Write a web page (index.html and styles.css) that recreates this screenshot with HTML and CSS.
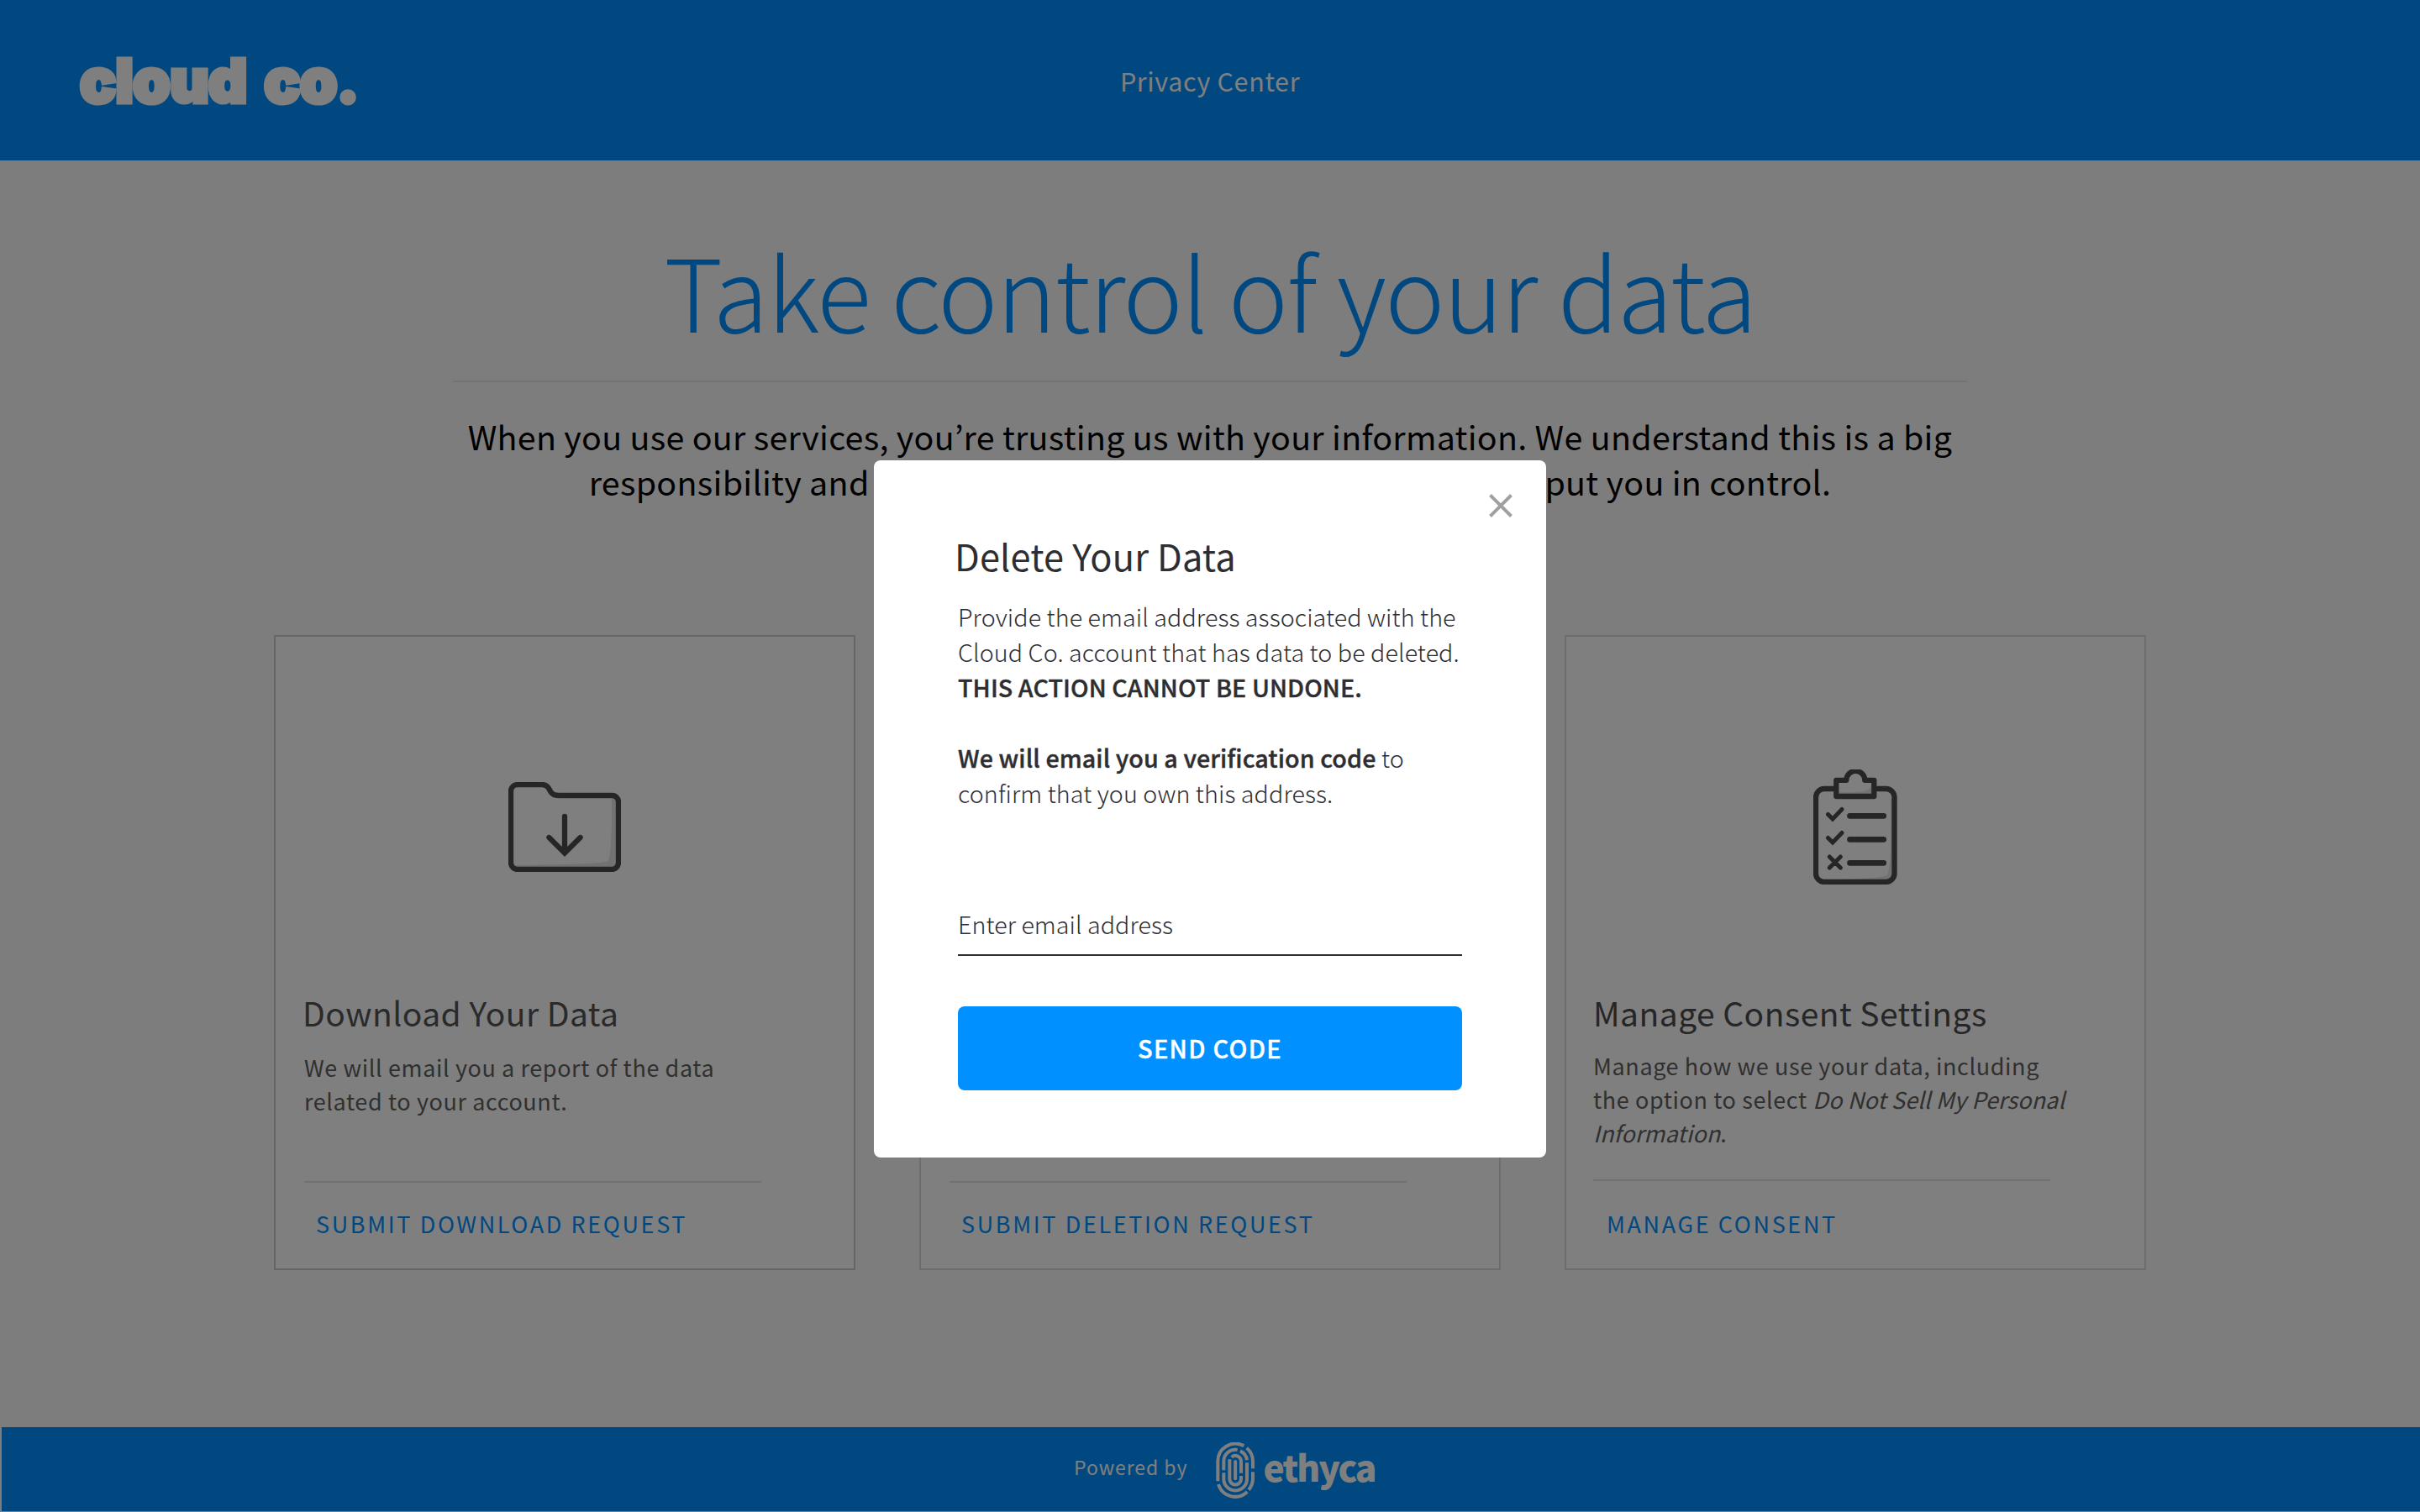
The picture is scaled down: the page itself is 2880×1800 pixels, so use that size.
FILE: index.html
```
<!DOCTYPE html>
<html lang="en">
<head>
	<meta charset="utf-8">
	<title>Privacy Center</title>
	<link rel="stylesheet" href="styles.css">
</head>
<body>
	<div class="page">
		<header class="header">
			<div class="logo">cloud co.</div>
			<div class="header-title">Privacy Center</div>
		</header>

		<main class="main">
			<h1 class="title">Take control of your data</h1>
			<p class="intro">When you use our services, you’re trusting us with your information. We understand this is a big<br>responsibility and <span class="intro-mid">we want to be transparent with you and to</span> put you in control.</p>

			<div class="cards">
				<div class="card card-first">
					<div class="card-icon">
						<svg width="134" height="107" viewBox="0 0 134 107">
							<path fill="#e4e4e4" d="M123 18C123.500 60 122 88 118.600 94C112 98 60 98 6 99V101H128V18Z"/>
							<g fill="none" stroke="#4d4d4d" stroke-width="6.300" stroke-linecap="round">
								<path d="M3 96V11a8 8 0 0 1 8-8H40C46 3 48 7 50 11S55 16 60 16H123.500a7.500 7.500 0 0 1 7.500 7.500V96a8 8 0 0 1-8 8H11a8 8 0 0 1-8-8Z"/>
								<path d="M67 41V83M48.400 66L67 84.500L85.600 66"/>
							</g>
						</svg>
					</div>
					<h2 class="card-title">Download Your Data</h2>
					<p class="card-text">We will email you a report of the data<br>related to your account.</p>
					<a class="card-link">SUBMIT DOWNLOAD REQUEST</a>
				</div>

				<div class="card">
					<div class="card-icon"></div>
					<h2 class="card-title"></h2>
					<p class="card-text"></p>
					<a class="card-link">SUBMIT DELETION REQUEST</a>
				</div>

				<div class="card card-consent">
					<div class="card-icon">
						<svg width="100" height="137" viewBox="0 0 100 137">
							<path fill="#e4e4e4" d="M92 34C93 80 92 121 87.700 125.700C80 130 50 130 31 130.700V132H94V34ZM69.500 15C69.500 20 67 23 64.700 24.500C58 28 40 27 30 27.500V30H70V15Z"/>
							<g fill="none" stroke="#4d4d4d" stroke-width="6.300">
								<path d="M25 23H13a10 10 0 0 0-10 10V124a10 10 0 0 0 10 10H86.500a10 10 0 0 0 10-10V33a10 10 0 0 0-10-10H75"/>
								<path stroke-linejoin="round" d="M27.300 32V12.800H39.300A11 11 0 0 1 61.300 12.800H72.300V32Z"/>
								<path stroke-width="6.800" stroke-linecap="round" d="M43.500 55.300H83.700M43.500 83.300H83.700M43.500 111.300H83.700"/>
								<path stroke-width="5" stroke-linecap="round" d="M17.500 53.500L23 59L34 47.500M17.500 81.500L23 87L34 75.500M19.300 104L32.300 117M32.300 104L19.300 117"/>
							</g>
						</svg>
					</div>
					<h2 class="card-title">Manage Consent Settings</h2>
					<p class="card-text">Manage how we use your data, including<br>the option to select <i>Do Not Sell My Personal<br>Information</i>.</p>
					<a class="card-link">MANAGE CONSENT</a>
				</div>
			</div>
		</main>

		<footer class="footer">
			<span class="powered">Powered by</span>
			<svg class="print" width="46.300" height="66.700" viewBox="0 0 139 200">
				<g fill="none" stroke="#fff" stroke-width="12">
					<path d="M7 139V69A62.500 62.500 0 0 1 100 13"/>
					<path d="M110 20A62.500 62.500 0 0 1 132 69V94"/>
					<path d="M132 106V131A62.500 62.500 0 0 1 117 170"/>
					<path d="M112 177A62.500 62.500 0 0 1 9 150"/>
					<path d="M28 100V68A41.500 41.500 0 0 1 77 27"/>
					<path d="M87 31A41.500 41.500 0 0 1 111 64"/>
					<path d="M111 73V131A41.500 41.500 0 0 1 28 131V109"/>
					<path d="M56 53A20.500 20.500 0 0 1 90 69V110"/>
					<path d="M49 61V131A20.500 20.500 0 0 0 90 131V120"/>
					<path stroke-linecap="round" d="M69.500 69V130"/>
				</g>
			</svg>
			<span class="brand">ethyca</span>
		</footer>
	</div>

	<div class="overlay">
		<div class="modal">
			<svg class="close" width="28" height="28" viewBox="0 0 28 28">
				<path d="M1.500 1.500L26.500 26.500M26.500 1.500L1.500 26.500" stroke="#a0a0a0" stroke-width="4"/>
			</svg>
			<h2 class="modal-title">Delete Your Data</h2>
			<p class="modal-text">Provide the email address associated with the<br>Cloud Co. account that has data to be deleted.<br><b>THIS ACTION CANNOT BE UNDONE.</b></p>
			<p class="modal-text"><b>We will email you a verification code</b> to<br>confirm that you own this address.</p>
			<div class="field">Enter email address</div>
			<div class="send">SEND CODE</div>
		</div>
	</div>
</body>
</html>
```
FILE: styles.css
```
* {
	box-sizing: border-box;
}
body {
	margin: 0;
	font-family: "Noto Sans CJK KR", "Noto Sans", sans-serif;
	color: #555;
	background-color: #fafafa;
}
h1, h2, p {
	margin: 0;
	font-weight: 400;
	white-space: nowrap;
}
.page {
	display: flex;
	flex-direction: column;
	width: 2880px;
	height: 1800px;
	overflow: hidden;
}

/* header */
.header {
	display: grid;
	grid-template-columns: 1fr auto 1fr;
	align-items: center;
	height: 191px;
	padding-left: 95px;
	padding-right: 95px;
	background-color: #0090ff;
	color: #fff;
}
.logo {
	font-family: Inter, sans-serif;
	font-size: 71.5px;
	font-weight: 900;
	line-height: 80px;
	letter-spacing: -0.6px;
	word-spacing: 7px;
	-webkit-text-stroke: 5px #fff;
}
.header-title {
	font-size: 30.5px;
	letter-spacing: 0.65px;
}

/* content */
.main {
	flex: 1;
	padding-top: 78px;
}
.title {
	width: 1802px;
	height: 186px;
	margin: 0 auto;
	padding-bottom: 34px;
	border-bottom: 2px solid #e6e6e6;
	font-size: 120px;
	font-weight: 300;
	line-height: 150px;
	letter-spacing: -1.48px;
	text-align: center;
	color: #0090ff;
}
.intro {
	padding-top: 37px;
	font-size: 39.4px;
	line-height: 54px;
	letter-spacing: 0.29px;
	text-align: center;
	color: #000;
}

/* cards */
.cards {
	display: flex;
	justify-content: center;
	gap: 76px;
	margin-top: 156px;
}
.card {
	width: 692px;
	height: 756px;
	padding-left: 34px;
	border: 2px solid #dadada;
	background-color: #fff;
}
.card-first {
	border-color: #ccc;
}
.card-icon {
	display: flex;
	align-items: center;
	justify-content: center;
	height: 419px;
	padding-top: 34px;
	padding-right: 35px;
}
.card-title {
	height: 56px;
	margin-left: -2px;
	font-size: 39px;
	line-height: 56px;
	letter-spacing: 0.45px;
}
.card-text {
	width: 544px;
	height: 175px;
	padding-top: 18px;
	border-bottom: 2px solid #e3e3e3;
	font-size: 27px;
	line-height: 40px;
	letter-spacing: 0.6px;
	color: #606060;
}
.card-text i {
	letter-spacing: 0.12px;
}
.card-link {
	display: block;
	margin: 29px 0 0 14px;
	font-size: 27px;
	line-height: 40px;
	letter-spacing: 2.62px;
	white-space: nowrap;
	color: #0090ff;
}
.card-consent {
	padding-left: 32px;
}
.card-consent .card-icon {
	padding-right: 32px;
}
.card-consent .card-title {
	margin-left: 0;
	color: #4d4d4d;
}
.card-consent .card-text {
	height: 173px;
	padding-top: 16px;
}
.card-consent .card-link {
	margin-top: 31px;
	margin-left: 16px;
}

/* footer */
.footer {
	display: flex;
	align-items: center;
	height: 100px;
	margin: 0 0 1px 2px;
	padding-left: 1276px;
	background-color: #0090ff;
	color: #fff;
}
.powered {
	padding-bottom: 6px;
	font-size: 23px;
	letter-spacing: 0.95px;
}
.print {
	margin: 3px 0 0 34px;
}
.brand {
	margin-left: 10px;
	padding-bottom: 6px;
	font-size: 42.5px;
	font-weight: 900;
	line-height: 94px;
	letter-spacing: -2px;
}

/* dialog */
.overlay {
	position: absolute;
	top: 0;
	left: 0;
	display: flex;
	justify-content: center;
	align-items: flex-start;
	width: 2880px;
	height: 1800px;
	padding-top: 548px;
	background-color: rgba(0, 0, 0, 0.5);
}
.modal {
	display: flex;
	flex-direction: column;
	width: 800px;
	height: 830px;
	padding: 40px 100px 0;
	border-radius: 8px;
	background-color: #fff;
	color: #2e2e32;
}
.close {
	align-self: flex-end;
	margin-right: -60px;
}
.modal-title {
	margin: 15px 0 0 -4px;
	font-size: 43.3px;
	line-height: 60px;
	letter-spacing: 0.17px;
}
.modal-text {
	margin: 22px 0 20px 0;
	font-size: 28.65px;
	font-weight: 300;
	line-height: 42px;
	letter-spacing: 0.08px;
}
.modal-text b {
	font-weight: 500;
	-webkit-text-stroke: 0.4px #2e2e32;
}
.field {
	margin-top: 94px;
	padding: 0 0 15px 0;
	border-bottom: 2px solid #2e2e32;
	font-size: 28.65px;
	font-weight: 300;
	line-height: 42px;
	letter-spacing: 0.05px;
}
.send {
	margin-top: 60px;
	height: 100px;
	border-radius: 8px;
	background-color: #0090ff;
	font-size: 29px;
	font-weight: 500;
	line-height: 99px;
	letter-spacing: 1.3px;
	text-align: center;
	color: #fff;
	-webkit-text-stroke: 0.4px #fff;
}
```
